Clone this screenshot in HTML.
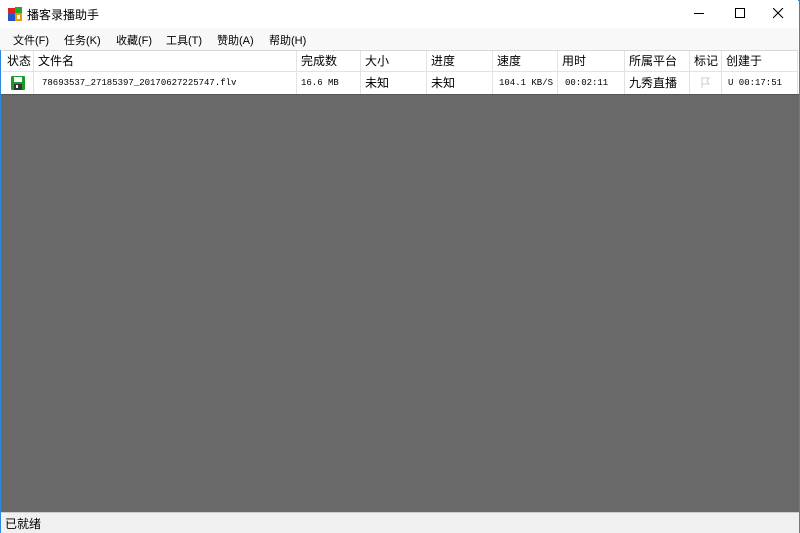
<!DOCTYPE html>
<html><head><meta charset="utf-8"><style>
body{margin:0;width:800px;height:533px;overflow:hidden;font-family:"Liberation Sans","Noto Sans CJK SC",sans-serif;font-size:12px;color:#000;position:relative;background:#fff}
.win{position:absolute;left:0;top:0;width:798px;height:531px;border:1px solid #2b8ae0;background:#fff}
.title{position:absolute;left:0;top:0;width:798px;height:28px;background:#fff}
.menu{position:absolute;left:0;top:28px;width:798px;height:22px;background:#f8f8f8;font-size:11px}
.menu span{position:absolute;top:4px}
.grid{position:absolute;left:2px;top:50px;width:796px;height:44px;background:#fff;border-top:1px solid #d8d8d8}
.cell{position:absolute;height:21px;line-height:21px;border-right:1px solid #e3e3e3;box-sizing:border-box;padding-left:4px;white-space:nowrap;overflow:hidden}
.r1{top:0;border-bottom:1px solid #e3e3e3}
.r2{top:21px;height:22px;line-height:23px;font-family:"Liberation Mono","Noto Sans CJK SC",monospace;font-size:9px}
.gray{position:absolute;left:1px;top:94px;width:798px;height:418px;background:#696969;border-top:1px solid #555}
.status{position:absolute;left:1px;top:512px;width:798px;height:20px;background:#f0f0f0;border-top:1px solid #ccc}
</style></head><body>
<div class="win"></div>
<div class="title">
<svg style="position:absolute;left:8px;top:7px" width="14" height="14"><rect x="0" y="1" width="7" height="6" fill="#d22"/><rect x="7" y="0" width="7" height="6" fill="#2a2"/><rect x="0" y="7" width="7" height="7" fill="#25c"/><rect x="7" y="6" width="7" height="8" fill="#e90"/><rect x="9" y="8" width="3" height="4" fill="#fff"/></svg>
<span style="position:absolute;left:27px;top:6px;font-size:12px">播客录播助手</span>
<div style="position:absolute;left:694px;top:13px;width:10px;height:1px;background:#000"></div>
<div style="position:absolute;left:735px;top:8px;width:8px;height:8px;border:1px solid #000"></div>
<svg style="position:absolute;left:773px;top:8px" width="11" height="11"><path d="M0 0L10 10M10 0L0 10" stroke="#000" stroke-width="1.1"/></svg>
</div>
<div class="menu">
<span style="left:13px">文件(F)</span><span style="left:64px">任务(K)</span><span style="left:116px">收藏(F)</span><span style="left:166px">工具(T)</span><span style="left:217px">赞助(A)</span><span style="left:269px">帮助(H)</span>
</div>
<div class="grid">
<div class="cell r1" style="left:0;width:32px;padding-left:5px">状态</div>
<div class="cell r1" style="left:32px;width:263px">文件名</div>
<div class="cell r1" style="left:295px;width:64px">完成数</div>
<div class="cell r1" style="left:359px;width:66px">大小</div>
<div class="cell r1" style="left:425px;width:66px">进度</div>
<div class="cell r1" style="left:491px;width:65px">速度</div>
<div class="cell r1" style="left:556px;width:67px">用时</div>
<div class="cell r1" style="left:623px;width:65px">所属平台</div>
<div class="cell r1" style="left:688px;width:32px">标记</div>
<div class="cell r1" style="left:720px;width:76px">创建于</div>
<div class="cell r2" style="left:0;width:32px"><svg style="position:absolute;left:9px;top:4px" width="14" height="14"><rect x="0" y="0" width="14" height="14" rx="1" fill="#1a9a2a"/><rect x="3" y="1" width="8" height="5" fill="#fff"/><rect x="3" y="8" width="8" height="6" fill="#333"/><rect x="5" y="9" width="2" height="3" fill="#fff"/></svg></div>
<div class="cell r2" style="left:32px;width:263px;padding-left:8px">78693537_27185397_20170627225747.flv</div>
<div class="cell r2" style="left:295px;width:64px">16.6 MB</div>
<div class="cell r2" style="left:359px;width:66px;font-family:'Noto Sans CJK SC';font-size:12px;line-height:21px">未知</div>
<div class="cell r2" style="left:425px;width:66px;font-family:'Noto Sans CJK SC';font-size:12px;line-height:21px">未知</div>
<div class="cell r2" style="left:491px;width:65px;padding-left:6px">104.1 KB/S</div>
<div class="cell r2" style="left:556px;width:67px;padding-left:7px">00:02:11</div>
<div class="cell r2" style="left:623px;width:65px;font-family:'Noto Sans CJK SC';font-size:12px;line-height:21px">九秀直播</div>
<div class="cell r2" style="left:688px;width:32px"><svg style="position:absolute;left:11px;top:5px" width="10" height="11"><path d="M1 0V11M1 1H8L6 4L8 7H1" fill="none" stroke="#ccc"/></svg></div>
<div class="cell r2" style="left:720px;width:76px;padding-left:6px">U 00:17:51</div>
</div>
<div class="gray"></div>
<div class="status"><span style="position:absolute;left:4px;top:2px">已就绪</span></div>
</body></html>
